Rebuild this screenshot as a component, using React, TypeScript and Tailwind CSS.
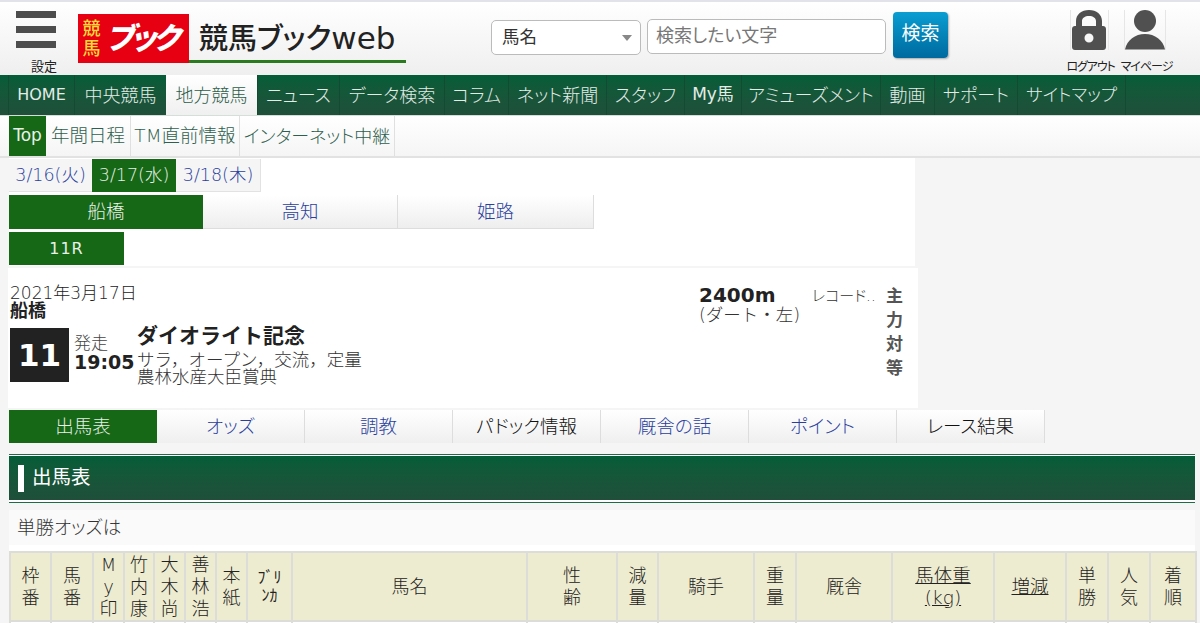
const navItems = [
  { label: "HOME", w: "w-[66px]", size: "text-[16px] font-normal" },
  { label: "中央競馬", w: "w-[92px]", size: "text-[18px]" },
  { label: "地方競馬", w: "w-[91px]", size: "text-[18px]", active: true },
  { label: "ニュース", w: "w-[82px]", size: "text-[18px]" },
  { label: "データ検索", w: "w-[105px]", size: "text-[18px]" },
  { label: "コラム", w: "w-[64px]", size: "text-[18px]" },
  { label: "ネット新聞", w: "w-[98px]", size: "text-[18px]" },
  { label: "スタッフ", w: "w-[78px]", size: "text-[18px]" },
  { label: "My馬", w: "w-[57px]", size: "text-[17px] font-normal" },
  { label: "アミューズメント", w: "w-[139px]", size: "text-[18px]" },
  { label: "動画", w: "w-[54px]", size: "text-[18px]" },
  { label: "サポート", w: "w-[83px]", size: "text-[18px]" },
  { label: "サイトマップ", w: "w-[108px]", size: "text-[17.500px]" },
]

const subItems = [
  { label: "Top", w: "w-[37px]", size: "text-[17px]", active: true },
  { label: "年間日程", w: "w-[85px]", size: "text-[18.500px]" },
  { label: "TM直前情報", w: "w-[109px]", size: "text-[18.500px]" },
  { label: "インターネット中継", w: "w-[155px]", size: "text-[18px]" },
]

const raceTabs = [
  { label: "出馬表", active: true },
  { label: "オッズ" },
  { label: "調教" },
  { label: "パドック情報", plain: true },
  { label: "厩舎の話" },
  { label: "ポイント" },
  { label: "レース結果", plain: true },
]

const columns = [
  { w: "w-[41px]", lines: ["枠", "番"] },
  { w: "w-[42px]", lines: ["馬", "番"] },
  { w: "w-[31px]", lines: ["M", "y", "印"] },
  { w: "w-[30px]", lines: ["竹", "内", "康"] },
  { w: "w-[31px]", lines: ["大", "木", "尚"] },
  { w: "w-[31px]", lines: ["善", "林", "浩"] },
  { w: "w-[31px]", lines: ["本", "紙"] },
  { w: "w-[45px]", lines: ["ﾌﾞﾘ", "ﾝｶ"], small: true },
  { w: "w-[235px]", lines: ["馬名"] },
  { w: "w-[90px]", lines: ["性", "齢"] },
  { w: "w-[41px]", lines: ["減", "量"] },
  { w: "w-[96px]", lines: ["騎手"] },
  { w: "w-[42px]", lines: ["重", "量"] },
  { w: "w-[96px]", lines: ["厩舎"] },
  { w: "w-[102px]", lines: ["馬体重", "(kg)"], link: true },
  { w: "w-[72px]", lines: ["増減"], link: true },
  { w: "w-[42px]", lines: ["単", "勝"] },
  { w: "w-[42px]", lines: ["人", "気"] },
  { w: "w-[46px]", lines: ["着", "順"] },
]

function LockIcon() {
  return (
    <svg viewBox="0 0 34 40" className="w-[34px] h-[40px]" fill="#505050">
      <path d="M4 18v-7C4 4.500 9.500 0 17 0s13 4.500 13 11v7h-6v-7c0-3-3-5-7-5s-7 2-7 5v7z" />
      <path
        fillRule="evenodd"
        d="M3 16h28c1.700 0 3 1.300 3 3v18c0 1.700-1.300 3-3 3H3c-1.700 0-3-1.300-3-3V19c0-1.700 1.300-3 3-3zm14 7.500a4.500 4.500 0 1 0 0 9 4.500 4.500 0 0 0 0-9z"
      />
    </svg>
  )
}

function UserIcon() {
  return (
    <svg viewBox="0 0 40 40" className="w-[40px] h-[40px]" fill="#505050">
      <circle cx="20" cy="11" r="11" />
      <path d="M0 39.500C2 30 10 24 20 24s18 6 20 15.500z" />
    </svg>
  )
}

function Header() {
  return (
    <header className="h-[75px] flex bg-gradient-to-b from-white to-[#efefef] border-t-2 border-[#e2e2ea]">
      <div className="w-[78px] flex flex-col pl-4 pt-[9px]">
        <div className="w-10 flex flex-col gap-2">
          <div className="h-[7px] bg-[#4d4d4d]" />
          <div className="h-[7px] bg-[#4d4d4d]" />
          <div className="h-[7px] bg-[#4d4d4d]" />
        </div>
        <span className="mt-[11px] ml-[15px] text-[13px] leading-[16px] text-[#222]">設定</span>
      </div>
      <div className="w-[328px] pt-3 flex items-start">
        <div className="w-[111px] h-[49px] shrink-0 bg-[#e60012] flex items-center pl-[4px] overflow-hidden">
          <span className="w-[19px] text-[#ffd83a] text-[18px] leading-[20px] font-medium text-center">競馬</span>
          <span className="ml-[5px] text-white text-[30px] leading-none font-black italic tracking-[-3px] whitespace-nowrap">
            ブック
          </span>
        </div>
        <div className="flex-1 h-[49px] border-b-[3px] border-[#2c7a1f] pl-[10px] text-[29px] leading-[48px] font-medium text-[#222] whitespace-nowrap">
          競馬ブック<span className="text-[31px]">web</span>
        </div>
      </div>
      <div className="ml-[85px] flex items-start pt-[10px]">
        <div className="mt-2 w-[150px] h-[35px] bg-white border border-[#bbb] rounded-[5px] flex items-center justify-between pl-[10px] pr-[8px] text-[17.500px] text-[#333]">
          馬名
          <span className="w-0 h-0 border-x-[5px] border-x-transparent border-t-[6px] border-t-[#888]" />
        </div>
        <div className="mt-[7px] ml-[6px] w-[239px] h-[35px] bg-white border border-[#bbb] rounded-[5px] flex items-center pl-2 pb-[2px] text-[18px] text-[#777]">
          検索したい文字
        </div>
        <button className="ml-[7px] w-[55px] h-[46px] rounded-[4px] bg-gradient-to-b from-[#0a9ed2] to-[#006a9f] shadow-[1px_1px_2px_rgba(0,0,0,0.3)] text-white text-[19px] pb-1">
          検索
        </button>
      </div>
      <div className="ml-[116px] flex pt-2 gap-[3px] text-[12px] text-[#222]">
        <div className="w-[53px] flex flex-col items-center">
          <div className="w-[39px] mr-[3px] flex justify-center border-x border-[#e6e6e6]">
            <LockIcon />
          </div>
          <span className="mt-[9px] whitespace-nowrap tracking-[-1.100px] leading-[16px]">ログアウト</span>
        </div>
        <div className="w-[53px] flex flex-col items-center">
          <div className="w-[42px] mr-[3px] flex justify-center border-x border-[#e6e6e6]">
            <UserIcon />
          </div>
          <span className="mt-[9px] whitespace-nowrap tracking-[-1px] leading-[16px]">マイページ</span>
        </div>
      </div>
    </header>
  )
}

function MainNav() {
  return (
    <nav className="h-[41px] pl-2 flex bg-gradient-to-b from-[#045d38] to-[#1f4f3a] border-b border-[#d5dfd9] font-light">
      {navItems.map((item) => (
        <div
          key={item.label}
          className={
            item.active
              ? `${item.w} ${item.size} bg-gradient-to-b from-white to-[#f0f0f0] text-[#2d5d4a] flex items-center justify-center whitespace-nowrap`
              : `${item.w} ${item.size} border-l border-[#144a31] text-[#e4ece8] flex items-center justify-center whitespace-nowrap`
          }
        >
          {item.label}
        </div>
      ))}
      <div className="border-l border-[#144a31]" />
    </nav>
  )
}

function SubNav() {
  return (
    <div className="h-[42px] pl-[9px] flex bg-gradient-to-b from-white to-[#f5f5f5] border-b-2 border-[#e2e2e2] font-light">
      {subItems.map((item) => (
        <div
          key={item.label}
          className={
            item.active
              ? `${item.w} ${item.size} font-normal bg-[#166816] text-[#e8f0e8] flex items-center justify-center`
              : `${item.w} ${item.size} border-r border-[#e0e0e0] text-[#2f5f4e] flex items-center justify-center whitespace-nowrap`
          }
        >
          {item.label}
        </div>
      ))}
    </div>
  )
}

function RaceSelectors() {
  return (
    <div className="w-[906px] bg-white font-light">
      <div className="h-[37px] flex pt-[1px] text-[17.500px]">
        <div className="w-[83px] h-[33px] bg-[#f5f5f5] border-b border-[#e2e2e2] text-[#2a3f9e] flex items-center justify-center">
          3/16(火)
        </div>
        <div className="w-[84px] h-[33px] bg-[#166816] text-[#e8f0e8] flex items-center justify-center">3/17(水)</div>
        <div className="w-[85px] h-[33px] bg-[#f5f5f5] border-r border-b border-[#e2e2e2] text-[#2a3f9e] flex items-center justify-center">
          3/18(木)
        </div>
      </div>
      <div className="h-[37px] flex text-[18.500px]">
        <div className="w-[194px] h-[34px] bg-[#166816] text-[#e8f0e8] flex items-center justify-center">船橋</div>
        <div className="w-[195px] h-[34px] bg-gradient-to-b from-white to-[#eeeeee] border-r border-b border-[#dddddd] text-[#2a3f9e] flex items-center justify-center">
          高知
        </div>
        <div className="w-[196px] h-[34px] bg-gradient-to-b from-white to-[#eeeeee] border-r border-b border-[#dddddd] text-[#2a3f9e] flex items-center justify-center">
          姫路
        </div>
      </div>
      <div className="h-[34px]">
        <div className="w-[115px] h-[33px] bg-[#166816] text-[#e8f0e8] text-[16px] font-normal tracking-[1px] flex items-center justify-center">
          11R
        </div>
      </div>
    </div>
  )
}

function RaceInfo() {
  return (
    <div className="mt-[2px] -ml-px w-[910px] h-[140px] bg-white flex text-[#222]">
      <div className="w-[691px] pl-[2px] pt-[16px]">
        <div className="text-[17px] leading-[18px] font-light">2021年3月17日</div>
        <div className="text-[18px] leading-[18px] font-bold">船橋</div>
        <div className="mt-[8px] flex">
          <div className="w-[59px] h-[54px] bg-[#222] text-white text-[31px] font-bold flex items-center justify-center">
            11
          </div>
          <div className="ml-[5px] w-[63px] pt-[5px]">
            <div className="text-[17px] leading-[20px] text-[#444] font-light">発走</div>
            <div className="text-[19px] leading-[18px] font-bold whitespace-nowrap">19:05</div>
          </div>
          <div>
            <div className="text-[21px] leading-[24px] font-bold -mt-[4px] [font-feature-settings:normal]">
              ダイオライト記念
            </div>
            <div className="mt-[4px] text-[17.500px] leading-[17px] text-[#333] font-light whitespace-nowrap [font-feature-settings:normal]">
              サラ，オープン，交流，定量
            </div>
            <div className="text-[17.500px] leading-[16px] text-[#333] font-light whitespace-nowrap">
              農林水産大臣賞典
            </div>
          </div>
        </div>
      </div>
      <div className="w-[113px] pt-[17px]">
        <div className="text-[20px] leading-[20px] font-bold">2400m</div>
        <div className="text-[17.500px] leading-[20px] text-[#333] font-light whitespace-nowrap [font-feature-settings:normal]">
          (ダート・左)
        </div>
      </div>
      <div className="w-[74px] pt-[18px] text-[15px] leading-[20px] text-[#333] font-light whitespace-nowrap">
        レコード..
      </div>
      <div className="w-[17px] pt-[16px] text-[17px] leading-[24px] font-bold text-[#555]">
        <div>主</div>
        <div>力</div>
        <div>対</div>
        <div>等</div>
      </div>
    </div>
  )
}

function RaceTabs() {
  return (
    <div className="mt-[2px] h-[33px] flex text-[18.500px] font-light">
      {raceTabs.map((tab) => (
        <div
          key={tab.label}
          className={
            tab.active
              ? "w-[148px] bg-[#166816] text-[#e8f0e8] flex items-center justify-center"
              : tab.plain
                ? "w-[148px] bg-gradient-to-b from-white to-[#efefef] border-r border-[#dddddd] text-[#111] flex items-center justify-center"
                : "w-[148px] bg-gradient-to-b from-white to-[#efefef] border-r border-[#dddddd] text-[#2a3f9e] flex items-center justify-center"
          }
        >
          {tab.label}
        </div>
      ))}
    </div>
  )
}

function EntryTable() {
  return (
    <table className="table-fixed border-collapse w-[1186px] text-[#222] text-[18px] leading-[22px]">
      <thead className="bg-[#eeecd0]">
        <tr className="h-[69px]">
          {columns.map((col) => (
            <th key={col.lines.join("")} className={`${col.w} border-2 border-[#dcdcd8] font-light text-center p-0`}>
              {col.lines.map((line) => (
                <div
                  key={line}
                  className={
                    col.link ? "underline text-[18.500px]" : col.small ? "text-[16px] leading-[18px] font-normal" : ""
                  }
                >
                  {line}
                </div>
              ))}
            </th>
          ))}
        </tr>
      </thead>
      <tbody className="bg-white">
        <tr className="h-[30px]">
          {columns.map((col) => (
            <td key={col.lines.join("")} className="border-2 border-[#dcdcd8]" />
          ))}
        </tr>
      </tbody>
    </table>
  )
}

export default function App() {
  return (
    <div className="w-[1200px] h-[623px] overflow-hidden bg-[#f5f5f5] font-['DejaVu_Sans','Noto_Sans_CJK_JP',sans-serif] [font-feature-settings:'palt']">
      <Header />
      <MainNav />
      <SubNav />
      <div className="pl-[9px]">
        <RaceSelectors />
        <RaceInfo />
        <RaceTabs />
        <div className="mt-[11px] w-[1186px] h-[49px] border-y border-[#1f6a47] py-[1px] bg-white">
          <div className="h-[44px] bg-gradient-to-b from-[#045d38] to-[#1f4f3a] flex items-center pl-[9px]">
            <div className="w-[6px] h-[27px] bg-white" />
            <div className="ml-2 text-white text-[19.500px]">出馬表</div>
          </div>
        </div>
        <div className="mt-[7px] w-[1186px] h-[35px] bg-[#fafafa] pl-2 flex items-center text-[18.500px] font-light text-[#333]">
          単勝オッズは
        </div>
        <div className="w-[1186px] h-[6px] bg-white" />
        <EntryTable />
      </div>
    </div>
  )
}
